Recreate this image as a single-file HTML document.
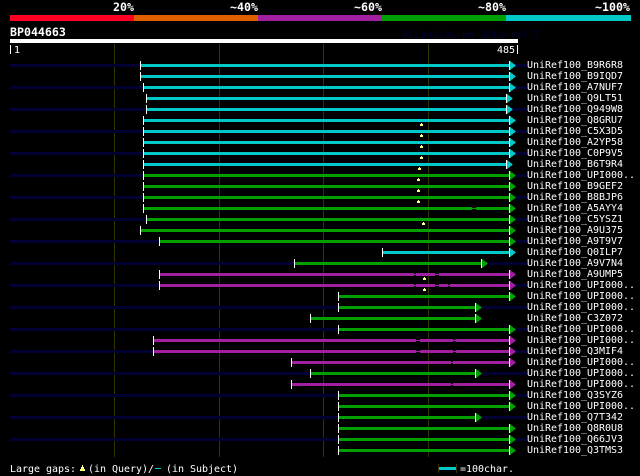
<!DOCTYPE html>
<html><head><meta charset="utf-8"><style>
html,body{margin:0;padding:0;background:#000;width:640px;height:476px;overflow:hidden}
svg{display:block}
rect,polygon{shape-rendering:crispEdges}
text{font-family:"DejaVu Sans Mono","Liberation Mono",monospace;fill:#fff;white-space:pre}
.s{font-size:10px;letter-spacing:-.02px}
.b{font-size:11.6px;font-weight:bold;letter-spacing:0}
.d{fill:#000033}.w{fill:#fff}.g{fill:#333300}.y{fill:#ffff80}.k{fill:#000}
.c{fill:#00c8c8}.n{fill:#00a000}.m{fill:#a020a0}
</style></head><body>
<svg width="640" height="476" viewBox="0 0 640 476" xmlns="http://www.w3.org/2000/svg">
<text class="b" x="113" y="11">20%</text><text class="b" x="230" y="11">~40%</text><text class="b" x="354" y="11">~60%</text><text class="b" x="478" y="11">~80%</text><text class="b" x="595" y="11">~100%</text>
<rect x="10" y="15" width="124" height="6" fill="#ff0022"/><rect x="134" y="15" width="124" height="6" fill="#e06000"/><rect x="258" y="15" width="124" height="6" class="m"/><rect x="382" y="15" width="124" height="6" class="n"/><rect x="506" y="15" width="125" height="6" class="c"/>
<text class="b" x="10" y="36">BP044663</text>
<text class="s" x="402" y="38" style="fill:#000033">AlignView.pm Beta rel.7</text>
<rect x="10" y="39" width="508" height="4" class="w"/>
<rect x="10" y="45" width="1" height="9" class="w"/><text class="s" x="14" y="53">1</text><text class="s" x="497" y="53">485</text><rect x="517" y="45" width="1" height="9" class="w"/>
<rect x="114" y="44" width="1" height="413" class="g"/><rect x="219" y="44" width="1" height="413" class="g"/><rect x="323" y="44" width="1" height="413" class="g"/><rect x="428" y="44" width="1" height="413" class="g"/>

<rect x="10" y="64" width="517" height="3" class="d"/><rect x="141" y="64" width="368" height="3" class="c"/><rect x="140" y="61" width="1" height="9" class="w"/><rect x="509" y="61" width="1" height="9" class="w"/><polygon points="510,61 510,70 516,65.5" class="c"/><text class="s" x="527" y="68">UniRef100_B9R6R8</text>
<rect x="141" y="75" width="368" height="3" class="c"/><rect x="140" y="72" width="1" height="9" class="w"/><rect x="509" y="72" width="1" height="9" class="w"/><polygon points="510,72 510,81 516,76.5" class="c"/><text class="s" x="527" y="79">UniRef100_B9IQD7</text>
<rect x="10" y="86" width="517" height="3" class="d"/><rect x="144" y="86" width="365" height="3" class="c"/><rect x="143" y="83" width="1" height="9" class="w"/><rect x="509" y="83" width="1" height="9" class="w"/><polygon points="510,83 510,92 516,87.5" class="c"/><text class="s" x="527" y="90">UniRef100_A7NUF7</text>
<rect x="147" y="97" width="359" height="3" class="c"/><rect x="146" y="94" width="1" height="9" class="w"/><rect x="506" y="94" width="1" height="9" class="w"/><polygon points="507,94 507,103 513,98.5" class="c"/><text class="s" x="527" y="101">UniRef100_Q9LT51</text>
<rect x="10" y="108" width="517" height="3" class="d"/><rect x="147" y="108" width="359" height="3" class="c"/><rect x="146" y="105" width="1" height="9" class="w"/><rect x="506" y="105" width="1" height="9" class="w"/><polygon points="507,105 507,114 513,109.5" class="c"/><text class="s" x="527" y="112">UniRef100_Q949W8</text>
<rect x="144" y="119" width="365" height="3" class="c"/><rect x="143" y="116" width="1" height="9" class="w"/><rect x="509" y="116" width="1" height="9" class="w"/><polygon points="510,116 510,125 516,120.5" class="c"/><text class="s" x="527" y="123">UniRef100_Q8GRU7</text>
<rect x="10" y="130" width="517" height="3" class="d"/><rect x="144" y="130" width="365" height="3" class="c"/><rect x="143" y="127" width="1" height="9" class="w"/><rect x="509" y="127" width="1" height="9" class="w"/><polygon points="510,127 510,136 516,131.5" class="c"/><text class="s" x="527" y="134">UniRef100_C5X3D5</text>
<rect x="144" y="141" width="365" height="3" class="c"/><rect x="143" y="138" width="1" height="9" class="w"/><rect x="509" y="138" width="1" height="9" class="w"/><polygon points="510,138 510,147 516,142.5" class="c"/><text class="s" x="527" y="145">UniRef100_A2YP58</text>
<rect x="10" y="152" width="517" height="3" class="d"/><rect x="144" y="152" width="365" height="3" class="c"/><rect x="143" y="149" width="1" height="9" class="w"/><rect x="509" y="149" width="1" height="9" class="w"/><polygon points="510,149 510,158 516,153.5" class="c"/><text class="s" x="527" y="156">UniRef100_C0P9V5</text>
<rect x="144" y="163" width="362" height="3" class="c"/><rect x="143" y="160" width="1" height="9" class="w"/><rect x="506" y="160" width="1" height="9" class="w"/><polygon points="507,160 507,169 513,164.5" class="c"/><text class="s" x="527" y="167">UniRef100_B6T9R4</text>
<rect x="10" y="174" width="517" height="3" class="d"/><rect x="144" y="174" width="365" height="3" class="n"/><rect x="143" y="171" width="1" height="9" class="w"/><rect x="509" y="171" width="1" height="9" class="w"/><polygon points="510,171 510,180 516,175.5" class="n"/><text class="s" x="527" y="178">UniRef100_UPI000..</text>
<rect x="144" y="185" width="365" height="3" class="n"/><rect x="143" y="182" width="1" height="9" class="w"/><rect x="509" y="182" width="1" height="9" class="w"/><polygon points="510,182 510,191 516,186.5" class="n"/><text class="s" x="527" y="189">UniRef100_B9GEF2</text>
<rect x="10" y="196" width="517" height="3" class="d"/><rect x="144" y="196" width="365" height="3" class="n"/><rect x="143" y="193" width="1" height="9" class="w"/><rect x="509" y="193" width="1" height="9" class="w"/><polygon points="510,193 510,202 516,197.5" class="n"/><text class="s" x="527" y="200">UniRef100_B8BJP6</text>
<rect x="144" y="207" width="365" height="3" class="n"/><rect x="143" y="204" width="1" height="9" class="w"/><rect x="509" y="204" width="1" height="9" class="w"/><polygon points="510,204 510,213 516,208.5" class="n"/><text class="s" x="527" y="211">UniRef100_A5AYY4</text>
<rect x="10" y="218" width="517" height="3" class="d"/><rect x="147" y="218" width="362" height="3" class="n"/><rect x="146" y="215" width="1" height="9" class="w"/><rect x="509" y="215" width="1" height="9" class="w"/><polygon points="510,215 510,224 516,219.5" class="n"/><text class="s" x="527" y="222">UniRef100_C5YSZ1</text>
<rect x="141" y="229" width="368" height="3" class="n"/><rect x="140" y="226" width="1" height="9" class="w"/><rect x="509" y="226" width="1" height="9" class="w"/><polygon points="510,226 510,235 516,230.5" class="n"/><text class="s" x="527" y="233">UniRef100_A9U375</text>
<rect x="10" y="240" width="517" height="3" class="d"/><rect x="160" y="240" width="349" height="3" class="n"/><rect x="159" y="237" width="1" height="9" class="w"/><rect x="509" y="237" width="1" height="9" class="w"/><polygon points="510,237 510,246 516,241.5" class="n"/><text class="s" x="527" y="244">UniRef100_A9T9V7</text>
<rect x="383" y="251" width="126" height="3" class="c"/><rect x="382" y="248" width="1" height="9" class="w"/><rect x="509" y="248" width="1" height="9" class="w"/><polygon points="510,248 510,257 516,252.5" class="c"/><text class="s" x="527" y="255">UniRef100_Q0ILP7</text>
<rect x="10" y="262" width="517" height="3" class="d"/><rect x="295" y="262" width="186" height="3" class="n"/><rect x="294" y="259" width="1" height="9" class="w"/><rect x="481" y="259" width="1" height="9" class="w"/><polygon points="482,259 482,268 488,263.5" class="n"/><text class="s" x="527" y="266">UniRef100_A9V7N4</text>
<rect x="160" y="273" width="349" height="3" class="m"/><rect x="159" y="270" width="1" height="9" class="w"/><rect x="509" y="270" width="1" height="9" class="w"/><polygon points="510,270 510,279 516,274.5" class="m"/><text class="s" x="527" y="277">UniRef100_A9UMP5</text>
<rect x="10" y="284" width="517" height="3" class="d"/><rect x="160" y="284" width="349" height="3" class="m"/><rect x="159" y="281" width="1" height="9" class="w"/><rect x="509" y="281" width="1" height="9" class="w"/><polygon points="510,281 510,290 516,285.5" class="m"/><text class="s" x="527" y="288">UniRef100_UPI000..</text>
<rect x="339" y="295" width="170" height="3" class="n"/><rect x="338" y="292" width="1" height="9" class="w"/><rect x="509" y="292" width="1" height="9" class="w"/><polygon points="510,292 510,301 516,296.5" class="n"/><text class="s" x="527" y="299">UniRef100_UPI000..</text>
<rect x="10" y="306" width="517" height="3" class="d"/><rect x="339" y="306" width="136" height="3" class="n"/><rect x="338" y="303" width="1" height="9" class="w"/><rect x="475" y="303" width="1" height="9" class="w"/><polygon points="476,303 476,312 482,307.5" class="n"/><text class="s" x="527" y="310">UniRef100_UPI000..</text>
<rect x="311" y="317" width="164" height="3" class="n"/><rect x="310" y="314" width="1" height="9" class="w"/><rect x="475" y="314" width="1" height="9" class="w"/><polygon points="476,314 476,323 482,318.5" class="n"/><text class="s" x="527" y="321">UniRef100_C3Z072</text>
<rect x="10" y="328" width="517" height="3" class="d"/><rect x="339" y="328" width="170" height="3" class="n"/><rect x="338" y="325" width="1" height="9" class="w"/><rect x="509" y="325" width="1" height="9" class="w"/><polygon points="510,325 510,334 516,329.5" class="n"/><text class="s" x="527" y="332">UniRef100_UPI000..</text>
<rect x="154" y="339" width="355" height="3" class="m"/><rect x="153" y="336" width="1" height="9" class="w"/><rect x="509" y="336" width="1" height="9" class="w"/><polygon points="510,336 510,345 516,340.5" class="m"/><text class="s" x="527" y="343">UniRef100_UPI000..</text>
<rect x="10" y="350" width="517" height="3" class="d"/><rect x="154" y="350" width="355" height="3" class="m"/><rect x="153" y="347" width="1" height="9" class="w"/><rect x="509" y="347" width="1" height="9" class="w"/><polygon points="510,347 510,356 516,351.5" class="m"/><text class="s" x="527" y="354">UniRef100_Q3MIF4</text>
<rect x="292" y="361" width="217" height="3" class="m"/><rect x="291" y="358" width="1" height="9" class="w"/><rect x="509" y="358" width="1" height="9" class="w"/><polygon points="510,358 510,367 516,362.5" class="m"/><text class="s" x="527" y="365">UniRef100_UPI000..</text>
<rect x="10" y="372" width="517" height="3" class="d"/><rect x="311" y="372" width="164" height="3" class="n"/><rect x="310" y="369" width="1" height="9" class="w"/><rect x="475" y="369" width="1" height="9" class="w"/><polygon points="476,369 476,378 482,373.5" class="n"/><text class="s" x="527" y="376">UniRef100_UPI000..</text>
<rect x="292" y="383" width="217" height="3" class="m"/><rect x="291" y="380" width="1" height="9" class="w"/><rect x="509" y="380" width="1" height="9" class="w"/><polygon points="510,380 510,389 516,384.5" class="m"/><text class="s" x="527" y="387">UniRef100_UPI000..</text>
<rect x="10" y="394" width="517" height="3" class="d"/><rect x="339" y="394" width="170" height="3" class="n"/><rect x="338" y="391" width="1" height="9" class="w"/><rect x="509" y="391" width="1" height="9" class="w"/><polygon points="510,391 510,400 516,395.5" class="n"/><text class="s" x="527" y="398">UniRef100_Q3SYZ6</text>
<rect x="339" y="405" width="170" height="3" class="n"/><rect x="338" y="402" width="1" height="9" class="w"/><rect x="509" y="402" width="1" height="9" class="w"/><polygon points="510,402 510,411 516,406.5" class="n"/><text class="s" x="527" y="409">UniRef100_UPI000..</text>
<rect x="10" y="416" width="517" height="3" class="d"/><rect x="339" y="416" width="136" height="3" class="n"/><rect x="338" y="413" width="1" height="9" class="w"/><rect x="475" y="413" width="1" height="9" class="w"/><polygon points="476,413 476,422 482,417.5" class="n"/><text class="s" x="527" y="420">UniRef100_Q7T342</text>
<rect x="339" y="427" width="170" height="3" class="n"/><rect x="338" y="424" width="1" height="9" class="w"/><rect x="509" y="424" width="1" height="9" class="w"/><polygon points="510,424 510,433 516,428.5" class="n"/><text class="s" x="527" y="431">UniRef100_Q8R0U8</text>
<rect x="10" y="438" width="517" height="3" class="d"/><rect x="339" y="438" width="170" height="3" class="n"/><rect x="338" y="435" width="1" height="9" class="w"/><rect x="509" y="435" width="1" height="9" class="w"/><polygon points="510,435 510,444 516,439.5" class="n"/><text class="s" x="527" y="442">UniRef100_Q66JV3</text>
<rect x="339" y="449" width="170" height="3" class="n"/><rect x="338" y="446" width="1" height="9" class="w"/><rect x="509" y="446" width="1" height="9" class="w"/><polygon points="510,446 510,455 516,450.5" class="n"/><text class="s" x="527" y="453">UniRef100_Q3TMS3</text>

<!-- subject gaps -->
<rect x="472" y="207" width="4" height="3" class="k"/><rect x="472" y="208" width="4" height="1" class="n"/>
<rect x="414" y="273" width="2" height="3" class="k"/><rect x="414" y="274" width="2" height="1" class="m"/><rect x="435" y="273" width="4" height="3" class="k"/><rect x="435" y="274" width="4" height="1" class="m"/>
<rect x="414" y="284" width="2" height="3" class="k"/><rect x="414" y="285" width="2" height="1" class="m"/><rect x="435" y="284" width="4" height="3" class="k"/><rect x="435" y="285" width="4" height="1" class="m"/><rect x="448" y="284" width="2" height="3" class="k"/><rect x="448" y="285" width="2" height="1" class="m"/>
<rect x="416" y="339" width="4" height="3" class="k"/><rect x="416" y="340" width="4" height="1" class="m"/><rect x="453" y="339" width="3" height="3" class="k"/><rect x="453" y="340" width="3" height="1" class="m"/>
<rect x="416" y="350" width="4" height="3" class="k"/><rect x="416" y="351" width="4" height="1" class="m"/><rect x="453" y="350" width="3" height="3" class="k"/><rect x="453" y="351" width="3" height="1" class="m"/>
<rect x="451" y="361" width="2" height="3" class="k"/><rect x="451" y="362" width="2" height="1" class="m"/>
<rect x="451" y="383" width="2" height="3" class="k"/><rect x="451" y="384" width="2" height="1" class="m"/>

<!-- query gap markers -->
<rect x="421" y="123" width="1" height="1" class="y"/><rect x="420" y="124" width="3" height="2" class="y"/>
<rect x="421" y="134" width="1" height="1" class="y"/><rect x="420" y="135" width="3" height="2" class="y"/>
<rect x="421" y="145" width="1" height="1" class="y"/><rect x="420" y="146" width="3" height="2" class="y"/>
<rect x="421" y="156" width="1" height="1" class="y"/><rect x="420" y="157" width="3" height="2" class="y"/>
<rect x="419" y="167" width="1" height="1" class="y"/><rect x="418" y="168" width="3" height="2" class="y"/>
<rect x="418" y="178" width="1" height="1" class="y"/><rect x="417" y="179" width="3" height="2" class="y"/>
<rect x="418" y="189" width="1" height="1" class="y"/><rect x="417" y="190" width="3" height="2" class="y"/>
<rect x="418" y="200" width="1" height="1" class="y"/><rect x="417" y="201" width="3" height="2" class="y"/>
<rect x="423" y="222" width="1" height="1" class="y"/><rect x="422" y="223" width="3" height="2" class="y"/>
<rect x="424" y="277" width="1" height="1" class="y"/><rect x="423" y="278" width="3" height="2" class="y"/>
<rect x="424" y="288" width="1" height="1" class="y"/><rect x="423" y="289" width="3" height="2" class="y"/>

<text class="s" x="10" y="472">Large gaps:</text>
<rect x="82" y="465" width="1" height="2" class="y"/><rect x="81" y="467" width="3" height="2" class="y"/><rect x="80" y="469" width="5" height="2" class="y"/>
<text class="s" x="88" y="472">(in Query)/</text>
<rect x="155" y="468" width="6" height="1" class="c"/>
<text class="s" x="166" y="472">(in Subject)</text>
<rect x="438" y="464" width="1" height="9" class="g"/><rect x="456" y="464" width="1" height="9" class="g"/><rect x="439" y="467" width="17" height="3" class="c"/>
<text class="s" x="460" y="472">=100char.</text>
</svg>
</body></html>
